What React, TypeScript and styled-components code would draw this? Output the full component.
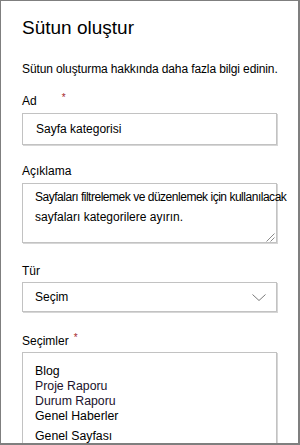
import React from "react";
import styled, {createGlobalStyle} from "styled-components";

const GlobalStyle = createGlobalStyle`
  body {
    margin: 0;
    background: #fff;
    font-family: "Liberation Sans", Arial, sans-serif;
    color: #000;
  }
`;

const choices = [
  {text: "Blog", tone: "#000"},
  {text: "Proje Raporu", tone: "#20122c"},
  {text: "Durum Raporu", tone: "#20122c"},
  {text: "Genel Haberler", tone: "#000"},
  {text: "Genel Sayfası", tone: "#000"},
];

export default function App() {
  return (
    <>
      <GlobalStyle />
      <Panel>
        <Title>Sütun oluştur</Title>
        <Intro>Sütun oluşturma hakkında daha fazla bilgi edinin.</Intro>

        <Field $gap={16}>
          <Label $after={4}>
            Ad<Star $offset={25}>*</Star>
          </Label>
          <TextBox>Sayfa kategorisi</TextBox>
        </Field>

        <Field $gap={18}>
          <Label $after={4}>Açıklama</Label>
          <Memo>
            <MemoLine $squeeze>Sayfaları filtrelemek ve düzenlemek için kullanılacak</MemoLine>
            <MemoLine>sayfaları kategorilere ayırın.</MemoLine>
            <Grip width="9" height="9" viewBox="0 0 9 9">
              <path d="M8.5 0.5 L0.5 8.5 M8.5 4.5 L4.5 8.5" stroke="#8a8a8a" strokeWidth="1" fill="none" />
            </Grip>
          </Memo>
        </Field>

        <Field $gap={20}>
          <Label $after={3}>Tür</Label>
          <Select>
            <span>Seçim</span>
            <svg width="14" height="7" viewBox="0 0 14 7">
              <polyline points="0.5,0.5 7,6.5 13.5,0.5" stroke="#7a7a7a" strokeWidth="1" fill="none" />
            </svg>
          </Select>
        </Field>

        <Field $gap={21}>
          <Label $after={3}>
            Seçimler<Star $offset={5}>*</Star>
          </Label>
          <Choices>
            {choices.map((c, i) => (
              <Choice key={c.text} $tone={c.tone} $spaced={i === choices.length - 1}>
                {c.text}
              </Choice>
            ))}
          </Choices>
        </Field>
      </Panel>
    </>
  );
}

const Panel = styled.div`
  width: 300px;
  height: 445px;
  box-sizing: border-box;
  border: 1px solid #7f7f7f;
  border-right-width: 2px;
  border-bottom-width: 2px;
  padding: 15px 0 0 21px;
  overflow: hidden;
  background: #fff;
`;

const Title = styled.h1`
  margin: 0;
  font-size: 19px;
  font-weight: normal;
  line-height: 24px;
  color: #000;
`;

const Intro = styled.div`
  margin-top: 21px;
  font-size: 12px;
  line-height: 16px;
  letter-spacing: -0.12px;
`;

const Field = styled.div<{$gap: number}>`
  margin-top: ${(p) => p.$gap}px;
`;

const Label = styled.div<{$after: number}>`
  display: flex;
  height: 16px;
  font-size: 12px;
  line-height: 16px;
  margin-bottom: ${(p) => p.$after}px;
`;

const Star = styled.span<{$offset: number}>`
  margin-left: ${(p) => p.$offset}px;
  color: #a4262c;
  font-size: 10px;
  position: relative;
  top: -3px;
`;

const boxBorder = `
  box-sizing: border-box;
  width: 255px;
  border: 1px solid #c2c2c2;
  box-shadow: 1px 1px 0 #d6d6d6;
  background: #fff;
`;

const TextBox = styled.div`
  ${boxBorder};
  height: 32px;
  display: flex;
  align-items: center;
  padding: 0 12px 0 13px;
  font-size: 12px;
  line-height: 16px;
`;

const Memo = styled.div`
  ${boxBorder};
  position: relative;
  height: 60px;
  padding: 3px 12px;
  font-size: 12px;
  line-height: 20px;
`;

const MemoLine = styled.div<{$squeeze?: boolean}>`
  white-space: nowrap;
  letter-spacing: ${(p) => (p.$squeeze ? "-0.48px" : "0")};
`;

const Grip = styled.svg`
  position: absolute;
  right: 1px;
  bottom: 0px;
`;

const Select = styled.div`
  ${boxBorder};
  height: 30px;
  display: flex;
  align-items: center;
  justify-content: space-between;
  padding: 0 10px 0 12px;
  font-size: 12px;
  line-height: 16px;
`;

const Choices = styled.div`
  ${boxBorder};
  height: 120px;
  padding: 11px 12px;
`;

const Choice = styled.div<{$tone: string; $spaced: boolean}>`
  font-size: 12.3px;
  line-height: 15px;
  color: ${(p) => p.$tone};
  margin-top: ${(p) => (p.$spaced ? 5 : 0)}px;
`;
